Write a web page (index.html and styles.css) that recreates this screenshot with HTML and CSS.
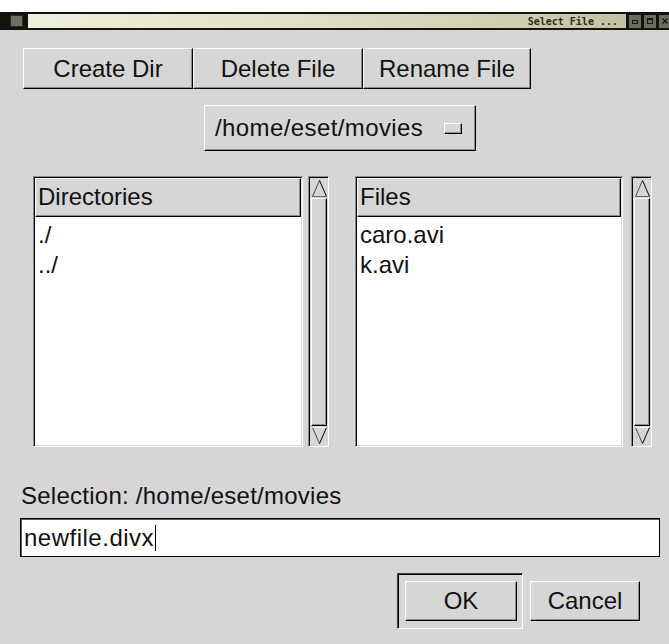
FILE: index.html
```html
<!DOCTYPE html>
<html>
<head>
<meta charset="utf-8">
<title>Select File ...</title>
<link rel="stylesheet" href="styles.css">
</head>
<body>
<div class="window">
  <div class="titlebar">
    <span class="tb-menu"></span>
    <div class="tb-caption"><span class="tb-text">Select File ...</span></div>
    <span class="tb-btn"><svg width="8" height="8" viewBox="0 0 8 8"><rect x="1.5" y="3.5" width="5" height="3" fill="none" stroke="#15150f"/></svg></span>
    <span class="tb-btn"><svg width="8" height="8" viewBox="0 0 8 8"><rect x="1.5" y="1.5" width="5" height="5" fill="none" stroke="#15150f"/><rect x="1" y="1" width="6" height="2" fill="#15150f"/></svg></span>
    <span class="tb-btn"><svg width="8" height="8" viewBox="0 0 8 8"><path d="M1.5 1.5 L6.5 6.5 M6.5 1.5 L1.5 6.5" stroke="#15150f" stroke-width="1.2"/></svg></span>
  </div>

  <div class="dialog">
    <div class="actions">
      <div class="btn act">Create Dir</div>
      <div class="btn act">Delete File</div>
      <div class="btn act last">Rename File</div>
    </div>

    <div class="btn optmenu">
      <span>/home/eset/movies</span>
      <span class="ind"></span>
    </div>

    <div class="lists">
      <div class="clist dirs">
        <div class="clist-head">Directories</div>
        <div class="rows">
          <div class="row">./</div>
          <div class="row">../</div>
        </div>
      </div>
      <div class="vscroll near">
        <svg class="arrow" width="17" height="20" viewBox="0 0 17 20"><path d="M1.5 18.5 L8.5 2.5" stroke="#4a4a4a" fill="none"/><path d="M8.5 2.5 L15.5 18.5" stroke="#000" fill="none"/><path d="M1.5 18.5 H15.5" stroke="#6a6a6a"/></svg>
        <div class="slider"></div>
        <svg class="arrow" width="17" height="20" viewBox="0 0 17 20"><path d="M1.5 1.5 L8.5 17.5" stroke="#4a4a4a" fill="none"/><path d="M8.5 17.5 L15.5 1.5" stroke="#000" fill="none"/><path d="M1.5 1.5 H15.5" stroke="#fff"/></svg>
      </div>

      <div class="clist files">
        <div class="clist-head">Files</div>
        <div class="rows">
          <div class="row">caro.avi</div>
          <div class="row">k.avi</div>
        </div>
      </div>
      <div class="vscroll far">
        <svg class="arrow" width="17" height="20" viewBox="0 0 17 20"><path d="M1.5 18.5 L8.5 2.5" stroke="#4a4a4a" fill="none"/><path d="M8.5 2.5 L15.5 18.5" stroke="#000" fill="none"/><path d="M1.5 18.5 H15.5" stroke="#6a6a6a"/></svg>
        <div class="slider"></div>
        <svg class="arrow" width="17" height="20" viewBox="0 0 17 20"><path d="M1.5 1.5 L8.5 17.5" stroke="#4a4a4a" fill="none"/><path d="M8.5 17.5 L15.5 1.5" stroke="#000" fill="none"/><path d="M1.5 1.5 H15.5" stroke="#fff"/></svg>
      </div>
    </div>

    <div class="selection">Selection: /home/eset/movies</div>

    <div class="entry"><span>newfile.divx</span><span class="caret"></span></div>

    <div class="buttons">
      <div class="default-frame"><div class="btn ok">OK</div></div>
      <div class="btn cancel">Cancel</div>
    </div>
  </div>
</div>
</body>
</html>
```

FILE: styles.css
```css
html, body {
  margin: 0;
  padding: 0;
  background: #ffffff;
}

body {
  font-family: "Liberation Sans", Arial, sans-serif;
  color: #111;
}

.window {
  margin-top: 12px;
  width: 669px;
  height: 632px;
  background: #d6d6d6;
  overflow: hidden;
  display: flex;
  flex-direction: column;
}

/* window manager title bar */
.titlebar {
  flex: none;
  height: 18px;
  background: #12130d;
  display: flex;
  align-items: center;
  padding-left: 10px;
  overflow: hidden;
}

.tb-menu {
  flex: none;
  width: 13px;
  height: 12px;
  box-sizing: border-box;
  background: #6f6f64;
  border: 1px solid #2c2c24;
}

.tb-caption {
  flex: none;
  margin-left: 5px;
  width: 598px;
  height: 14px;
  box-sizing: border-box;
  background: linear-gradient(to right, #efeddc 0%, #e2dfc8 45%, #cfcbb0 85%, #c4c0a3 100%);
  display: flex;
  justify-content: flex-end;
  align-items: center;
  padding-right: 8px;
}

.tb-text {
  font-family: "DejaVu Sans Mono", "Liberation Mono", monospace;
  font-size: 10px;
  font-weight: bold;
  color: #2a2a20;
  white-space: pre;
}

.tb-btn {
  flex: none;
  width: 12px;
  height: 13px;
  margin-left: 3px;
  background: #6b6b5e;
  display: flex;
  align-items: center;
  justify-content: center;
}

.tb-btn:first-of-type {
  margin-left: 4px;
}

/* dialog body */
.dialog {
  flex: 1;
  display: flex;
  flex-direction: column;
}

.btn {
  box-sizing: border-box;
  display: flex;
  align-items: center;
  justify-content: center;
  font-size: 24px;
  background: #d6d6d6;
  border: 1px solid;
  border-color: #ffffff #000000 #000000 #ffffff;
  box-shadow: inset -1px -1px 0 #8c8c8c;
  white-space: nowrap;
}

.actions {
  display: flex;
  margin: 18px 0 0 23px;
  height: 41px;
}

.act {
  width: 170px;
}

.act.last {
  width: 168px;
}

.optmenu {
  margin: 16px 0 0 204px;
  width: 272px;
  height: 46px;
  justify-content: flex-start;
  padding: 0 13px 0 10px;
  letter-spacing: 0.4px;
}

.optmenu .ind {
  margin-left: auto;
  width: 18px;
  height: 11px;
  box-sizing: border-box;
  border: 1px solid;
  border-color: #ffffff #000000 #000000 #ffffff;
  box-shadow: inset -1px -1px 0 #8c8c8c;
}

/* directory and file lists */
.lists {
  display: flex;
  margin: 25px 0 0 33px;
  height: 271px;
}

.clist {
  box-sizing: border-box;
  background: #ffffff;
  border: 1px solid;
  border-color: #8c8c8c #ffffff #ffffff #8c8c8c;
  box-shadow: inset 1px 1px 0 #000000, inset -1px -1px 0 #d6d6d6;
  padding: 1px;
}

.dirs {
  width: 270px;
}

.files {
  width: 268px;
  margin-left: 26px;
}

.clist-head {
  height: 39px;
  box-sizing: border-box;
  background: #d6d6d6;
  border: 1px solid;
  border-color: #ffffff #000000 #000000 #ffffff;
  box-shadow: inset -1px -1px 0 #8c8c8c;
  font-size: 24px;
  line-height: 36px;
  padding-left: 2px;
}

.rows {
  padding-top: 3px;
}

.row {
  font-size: 24px;
  line-height: 30px;
  height: 30px;
  padding-left: 3px;
}

.vscroll {
  box-sizing: border-box;
  width: 21px;
  background: #d6d6d6;
  border: 1px solid;
  border-color: #8c8c8c #ffffff #ffffff #8c8c8c;
  box-shadow: inset 1px 1px 0 #000000;
  padding: 1px 1px 0 2px;
  display: flex;
  flex-direction: column;
}

.vscroll.near {
  margin-left: 5px;
}

.vscroll.far {
  margin-left: 8px;
}

.arrow {
  flex: none;
  display: block;
}

.slider {
  flex: 1;
  box-sizing: border-box;
  border: 1px solid;
  border-color: #ffffff #000000 #000000 #ffffff;
  box-shadow: inset -1px -1px 0 #8c8c8c;
}

/* selection line and entry */
.selection {
  margin: 35px 0 0 21px;
  font-size: 24px;
  line-height: 28px;
  letter-spacing: 0.25px;
  white-space: nowrap;
}

.entry {
  margin: 8px 0 0 20px;
  width: 640px;
  height: 39px;
  box-sizing: border-box;
  background: #ffffff;
  border: 1px solid #000000;
  box-shadow: inset 1px 1px 0 #5a5a5a;
  display: flex;
  align-items: center;
  padding-left: 3px;
  font-size: 24px;
  letter-spacing: 0.5px;
}

.caret {
  display: inline-block;
  width: 1px;
  height: 26px;
  background: #000;
  margin-left: 1px;
}

/* OK / Cancel */
.buttons {
  display: flex;
  justify-content: flex-end;
  align-items: center;
  margin: 16px 29px 0 0;
}

.default-frame {
  box-sizing: border-box;
  width: 126px;
  height: 56px;
  border: 1px solid;
  border-color: #3c3c3c #ffffff #ffffff #3c3c3c;
  box-shadow: inset 1px 1px 0 #000000;
  padding: 7px 6px 7px 7px;
}

.ok {
  width: 112px;
  height: 40px;
}

.cancel {
  width: 110px;
  height: 40px;
  margin-left: 7px;
}
```
